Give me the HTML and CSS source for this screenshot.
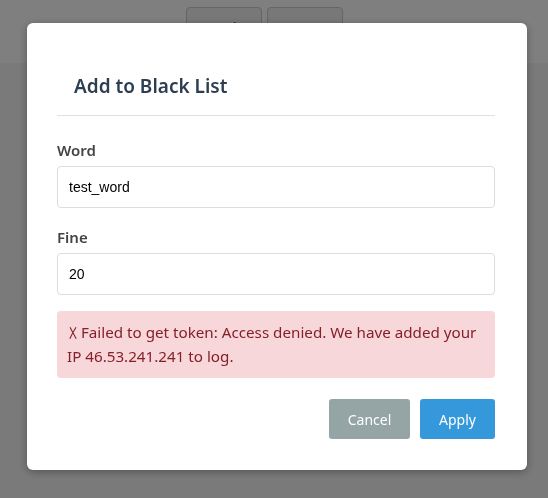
FILE: index.html
```html
<!DOCTYPE html>
<html>
<head>
<meta charset="utf-8">
<link rel="stylesheet" href="styles.css">
</head>
<body>
<div class="topbar">
  <button class="nav-btn">Back</button>
  <button class="nav-btn">Next</button>
</div>
<div class="overlay">
  <div class="modal">
    <div class="modal-header"><h2 class="modal-title">Add to Black List</h2></div>
    <div class="field">
      <label class="label">Word</label>
      <input class="input" type="text" value="test_word">
    </div>
    <div class="field">
      <label class="label">Fine</label>
      <input class="input" type="text" value="20">
    </div>
    <div class="alert"><svg class="x-icon" width="8" height="12" viewBox="0 0 8 12"><path d="M1 0.3 L7.2 11.7 M7 0.3 Q4 5 0.8 11.7" fill="none" stroke="currentColor" stroke-width="1.1"/></svg> Failed to get token: Access denied. We have added your IP 46.53.241.241 to log.</div>
    <div class="actions">
      <button class="btn btn-cancel">Cancel</button>
      <button class="btn btn-apply">Apply</button>
    </div>
  </div>
</div>
</body>
</html>
```
FILE: styles.css
```css
html, body {
  margin: 0;
  padding: 0;
  height: 100%;
  background: #f4f4f4;
  font-family: "Noto Sans", "Open Sans", sans-serif;
}
.topbar {
  height: 63px;
  background: #ffffff;
  display: flex;
  justify-content: center;
  align-items: flex-start;
  gap: 5px;
  padding: 7px 19px 0 0;
  box-sizing: border-box;
}
.nav-btn {
  width: 76px;
  height: 40px;
  border: 1px solid #cccccc;
  border-radius: 4px;
  background: #f0f0f0;
  color: #333;
  font-family: inherit;
  font-size: 15px;
}
.overlay {
  position: fixed;
  inset: 0;
  background: rgba(0, 0, 0, 0.5);
}
.modal {
  position: absolute;
  left: 27px;
  top: 23px;
  width: 500px;
  height: 447px;
  box-sizing: border-box;
  background: #fff;
  border-radius: 6px;
  padding: 0 32px 31px 30px;
  box-shadow: 0 2px 8px rgba(0, 0, 0, 0.3);
}
.modal-header {
  padding: 50px 17px 16px;
  border-bottom: 1px solid #dee2e6;
}
.modal-title {
  margin: 0;
  font-size: 19px;
  line-height: 26px;
  font-weight: 600;
  color: #2c3e50;
}
.field {
  display: flex;
  flex-direction: column;
}
.modal-header + .field { margin-top: 22px; }
.field + .field { margin-top: 17px; }
.label {
  font-size: 15px;
  line-height: 24px;
  font-weight: 600;
  color: #444;
  margin-bottom: 4px;
}
.input {
  height: 42px;
  box-sizing: border-box;
  border: 1px solid #dddddd;
  border-radius: 4px;
  padding: 0 11px;
  font-family: "Liberation Sans", Arial, sans-serif;
  font-size: 14px;
  color: #000;
  outline: none;
}
.alert {
  margin-top: 16px;
  background: #f8d7da;
  color: #842029;
  border-radius: 4px;
  padding: 9px 10px 10px;
  font-size: 15.2px;
  line-height: 24px;
}
.x-icon {
  display: inline-block;
  margin-left: 2px;
  vertical-align: -1px;
}
.actions {
  margin-top: 21px;
  display: flex;
  justify-content: flex-end;
  gap: 10px;
}
.btn {
  height: 40px;
  border: none;
  border-radius: 3px;
  color: #fff;
  font-family: inherit;
  font-size: 14px;
  padding: 0;
}
.btn-cancel { width: 81px; background: #95a5a6; }
.btn-apply { width: 75px; background: #3498db; }
```
